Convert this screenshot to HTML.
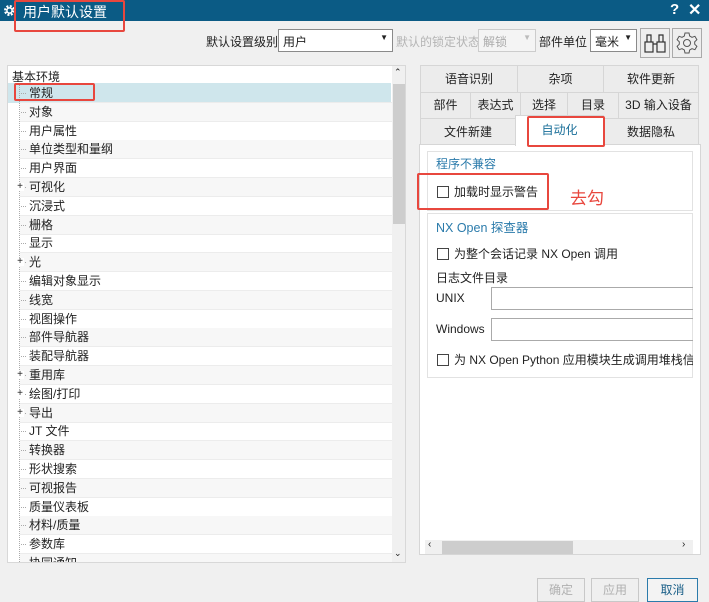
<!DOCTYPE html>
<html><head><meta charset="utf-8"><style>
*{box-sizing:border-box;margin:0;padding:0}
body{width:709px;height:600px;overflow:hidden;background:#f0f0f0;font-family:"Liberation Sans","Noto Sans CJK SC",sans-serif;font-size:12px;color:#222;position:relative}
.a{position:absolute}
.title{left:0;top:0;width:709px;height:21px;background:#0b5b85;color:#fff}
.red{border:2px solid #e8473e;border-radius:2px}
.combo{background:#fff;border:1px solid #8a8a8a;height:23px;padding:3px 4px;font-size:12px}
.tree{left:7px;top:65px;width:399px;height:498px;background:#fff;border:1px solid #d8d8d8;overflow:hidden}
.row{position:absolute;left:12px;width:372px;height:19px;border-bottom:1px solid #ececec;line-height:18px;padding-left:9px;font-size:12px}
.row.g{background:#f7f7f7}
.row:before{content:"";position:absolute;left:1px;top:9px;width:5px;border-top:1px dotted #aaa}
.vl{left:19px;top:83px;height:480px;border-left:1px dotted #aaa}
.pl{position:absolute;left:-4px;top:5px;width:8px;height:8px;font-size:10px;line-height:8px;text-align:center;background:#fff;z-index:2}
.tab{position:absolute;border:1px solid #d6d6d6;background:#ececec;text-align:center;font-size:12px}
.btn{position:absolute;top:578px;height:24px;border:1px solid #c8c8c8;background:#efefef;color:#b0b0b0;text-align:center;line-height:22px;font-size:12px}
.cb{display:inline-block;width:12px;height:12px;border:1px solid #444;vertical-align:-2px;margin-right:5px;background:#fff}
</style></head><body>
<div class="a title">
<svg class="a" style="left:3px;top:4px" width="13" height="13" viewBox="0 0 13 13"><circle cx="6.5" cy="6.5" r="4.3" fill="none" stroke="#fff" stroke-width="2.4" stroke-dasharray="2 1.4"/><circle cx="6.5" cy="6.5" r="2.6" fill="none" stroke="#fff" stroke-width="1.5"/></svg>
<span class="a" style="left:23px;top:2px;font-size:14px">用户默认设置</span>
<span class="a" style="left:670px;top:1px;font-size:15px;font-weight:bold">?</span>
<span class="a" style="left:688px;top:0px;font-size:16px;font-weight:bold">✕</span>
</div>
<div class="a red" style="left:14px;top:0;width:111px;height:32px"></div>

<span class="a" style="left:206px;top:33px">默认设置级别</span>
<div class="a combo" style="left:278px;top:29px;width:115px">用户<span class="a" style="right:4px;top:3px;font-size:8px">▼</span></div>
<span class="a" style="left:396px;top:33px;color:#b4b4b4">默认的锁定状态</span>
<div class="a combo" style="left:478px;top:29px;width:58px;border-color:#ccc;background:#f4f4f4;color:#aaa">解锁<span class="a" style="right:4px;top:3px;font-size:8px;color:#bbb">▼</span></div>
<span class="a" style="left:539px;top:33px">部件单位</span>
<div class="a combo" style="left:590px;top:29px;width:47px">毫米<span class="a" style="right:4px;top:3px;font-size:8px">▼</span></div>
<div class="a" style="left:640px;top:28px;width:30px;height:30px;border:1px solid #aaa;background:#eee">
<svg width="28" height="28" viewBox="0 0 28 28" fill="none" stroke="#333" stroke-width="1.2"><rect x="4" y="13" width="8" height="10"/><rect x="16" y="13" width="8" height="10"/><path d="M6 13V6h4v7M18 13V6h4v7M12 15h4"/></svg></div>
<div class="a" style="left:672px;top:28px;width:30px;height:30px;border:1px solid #aaa;background:#eee">
<svg width="28" height="28" viewBox="0 0 28 28" fill="none" stroke="#555" stroke-width="1"><path d="M12 4h4l.7 3 2.3 1.3 2.9-1 2 3.4-2.2 2.1v2.4l2.2 2.1-2 3.4-2.9-1L16.7 21 16 24h-4l-.7-3L9 19.7l-2.9 1-2-3.4 2.2-2.1v-2.4L4.1 10.7l2-3.4 2.9 1L11.3 7z"/><circle cx="14" cy="14" r="3.5"/></svg></div>

<div class="a tree">
<span class="a" style="left:4px;top:2px">基本环境</span>
<div class="a" style="left:0;top:17px;width:383px;height:20px;background:#cfe6ec"></div>
<div class="a vl" style="left:11px;top:18px"></div>
<div id="rows"></div>
<div class="a" style="left:384px;top:0;width:14px;height:498px;background:#f0f0f0"></div>
<div class="a" style="left:385px;top:18px;width:12px;height:140px;background:#cdcdcd"></div>
<span class="a" style="left:386px;top:1px;font-size:9px">⌃</span>
<span class="a" style="left:386px;top:482px;font-size:9px">⌄</span>
</div>
<div class="a red" style="left:14px;top:83px;width:81px;height:18px"></div>

<div class="a" style="left:419px;top:65px;width:282px;height:490px">
<div class="tab" style="left:1px;top:0;width:98px;height:28px;line-height:26px">语音识别</div>
<div class="tab" style="left:98px;top:0;width:87px;height:28px;line-height:26px">杂项</div>
<div class="tab" style="left:184px;top:0;width:96px;height:28px;line-height:26px">软件更新</div>
<div class="tab" style="left:1px;top:27px;width:51px;height:27px;line-height:25px">部件</div>
<div class="tab" style="left:51px;top:27px;width:51px;height:27px;line-height:25px">表达式</div>
<div class="tab" style="left:101px;top:27px;width:48px;height:27px;line-height:25px">选择</div>
<div class="tab" style="left:148px;top:27px;width:52px;height:27px;line-height:25px">目录</div>
<div class="tab" style="left:199px;top:27px;width:81px;height:27px;line-height:25px">3D 输入设备</div>
<div class="tab" style="left:1px;top:53px;width:96px;height:27px;line-height:26px">文件新建</div>
<div class="tab" style="left:184px;top:53px;width:96px;height:27px;line-height:26px">数据隐私</div>
<div class="a" style="left:0;top:79px;width:282px;height:411px;background:#fff;border:1px solid #d6d6d6"></div>
<div class="tab" style="left:96px;top:50px;width:89px;height:31px;line-height:28px;background:#fff;border-bottom:none;color:#1a6f99">自动化</div>
<div class="a red" style="left:108px;top:51px;width:78px;height:31px"></div>
<div class="a" style="left:8px;top:86px;width:266px;height:60px;border:1px solid #e2e2e2"></div>
<span class="a" style="left:17px;top:90px;color:#2b7bab">程序不兼容</span>
<span class="a" style="left:18px;top:118px"><span class="cb"></span>加载时显示警告</span>
<div class="a" style="left:8px;top:148px;width:266px;height:165px;border:1px solid #e2e2e2"></div>
<span class="a" style="left:17px;top:152px;color:#2b7bab;font-size:12.5px">NX Open 探查器</span>
<span class="a" style="left:18px;top:180px"><span class="cb"></span>为整个会话记录 NX Open 调用</span>
<span class="a" style="left:17px;top:204px">日志文件目录</span>
<span class="a" style="left:17px;top:226px">UNIX</span>
<div class="a" style="left:72px;top:222px;width:202px;height:23px;border:1px solid #aaa;border-right:none"></div>
<span class="a" style="left:17px;top:257px">Windows</span>
<div class="a" style="left:72px;top:253px;width:202px;height:23px;border:1px solid #aaa;border-right:none"></div>
<span class="a" style="left:18px;top:286px;white-space:nowrap;width:256px;overflow:hidden"><span class="cb"></span>为 NX Open Python 应用模块生成调用堆栈信息</span>
<div class="a" style="left:6px;top:475px;width:268px;height:14px;background:#f0f0f0"></div>
<div class="a" style="left:23px;top:476px;width:131px;height:13px;background:#cdcdcd"></div>
<span class="a" style="left:9px;top:474px;font-size:10px">‹</span>
<span class="a" style="left:263px;top:474px;font-size:10px">›</span>
</div>
<div class="a red" style="left:417px;top:173px;width:132px;height:37px"></div>
<span class="a" style="left:570px;top:184px;color:#e8473e;font-size:17px">去勾</span>

<div class="btn" style="left:537px;width:48px">确定</div>
<div class="btn" style="left:591px;width:48px">应用</div>
<div class="btn" style="left:647px;width:51px;border-color:#2b7bab;color:#1a5f88;background:#f3f3f3">取消</div>

<script>
(function(){
var items=["常规","对象","用户属性","单位类型和量纲","用户界面","+可视化","沉浸式","栅格","显示","+光","编辑对象显示","线宽","视图操作","部件导航器","装配导航器","+重用库","+绘图/打印","+导出","JT 文件","转换器","形状搜索","可视报告","质量仪表板","材料/质量","参数库","协同通知"];
var h="";
for(var i=0;i<items.length;i++){var t=items[i],p=t[0]=="+";if(p)t=t.slice(1);
var yy=18+i*18.8;
h+='<div class="row'+(i%2==1?' g':'')+'" style="top:'+yy+'px;'+(i==0?'background:transparent;':'')+'">'+(p?'<span class="pl">+</span>':'')+t+'</div>';}
document.getElementById("rows").outerHTML=h;
})();
</script>
</body></html>
